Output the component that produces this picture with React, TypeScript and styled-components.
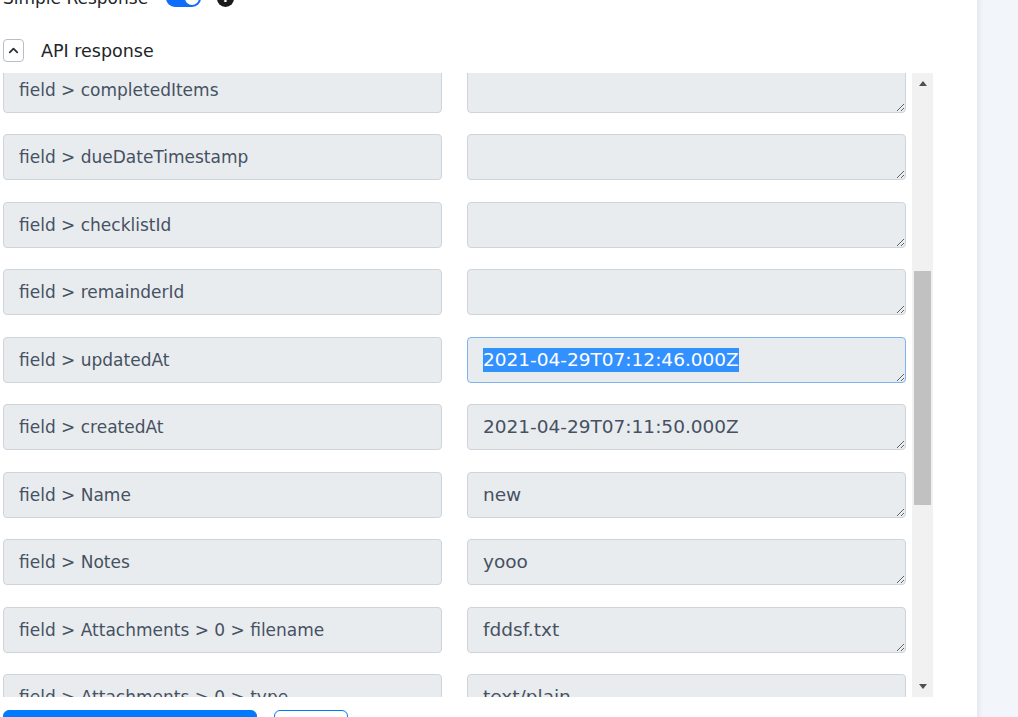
import React, { useLayoutEffect, useRef } from 'react';
import styled, { createGlobalStyle } from 'styled-components';
import { ChevronUp } from 'lucide-react';

interface ResponseField {
  key: string;
  value: string;
}

const fields: ResponseField[] = [
  { key: 'field > id', value: 'rec7Hk2LmQp0aZ' },
  { key: 'field > title', value: 'new' },
  { key: 'field > status', value: 'open' },
  { key: 'field > priority', value: '' },
  { key: 'field > assignee', value: '' },
  { key: 'field > labels', value: '' },
  { key: 'field > totalItems', value: '' },
  { key: 'field > completedItems', value: '' },
  { key: 'field > dueDateTimestamp', value: '' },
  { key: 'field > checklistId', value: '' },
  { key: 'field > remainderId', value: '' },
  { key: 'field > updatedAt', value: '2021-04-29T07:12:46.000Z' },
  { key: 'field > createdAt', value: '2021-04-29T07:11:50.000Z' },
  { key: 'field > Name', value: 'new' },
  { key: 'field > Notes', value: 'yooo' },
  { key: 'field > Attachments > 0 > filename', value: 'fddsf.txt' },
  { key: 'field > Attachments > 0 > type', value: 'text/plain' },
  { key: 'field > Attachments > 0 > size', value: '12' },
  { key: 'field > Attachments > 0 > url', value: '' },
];

const SELECTED_KEY = 'field > updatedAt';

const GlobalStyle = createGlobalStyle`
  html, body {
    margin: 0;
    padding: 0;
    background: #ffffff;
    font-family: "DejaVu Sans", "Noto Sans", sans-serif;
    overflow: hidden;
  }

  ::selection {
    background: #3390ff;
    color: #ffffff;
  }
`;

const Layout = styled.div`
  display: flex;
  height: 100vh;
`;

const Main = styled.main`
  width: 977px;
  height: 100vh;
  overflow: hidden;
  flex-shrink: 0;
`;

const Content = styled.div`
  padding: 20px 0 40px 3px;
`;

const Aside = styled.aside`
  flex: 1;
  background: #f2f5f9;
  box-shadow: inset 5px 0 5px -3px rgba(40, 60, 90, 0.08);
`;

const SwitchRow = styled.div`
  display: flex;
  align-items: center;
  height: 26px;
  gap: 16px;
  font-size: 17px;
  color: #212529;
`;

const Switch = styled.span`
  position: relative;
  display: inline-block;
  width: 35px;
  height: 18px;
  margin-left: 2px;
  border-radius: 9px;
  background: #0d6efd;

  &::after {
    content: '';
    position: absolute;
    top: 2px;
    right: 2px;
    width: 14px;
    height: 14px;
    border-radius: 50%;
    background: #ffffff;
  }
`;

const HelpIcon = styled.span`
  display: inline-flex;
  align-items: center;
  justify-content: center;
  width: 17px;
  height: 17px;
  border-radius: 50%;
  background: #1a1a1a;
  color: #ffffff;
  font-size: 12px;
  font-weight: 700;
`;

const SectionHeader = styled.div`
  display: flex;
  align-items: center;
  gap: 17px;
  margin-top: 28px;
  height: 23px;
  font-size: 17.5px;
  color: #212529;
`;

const CollapseButton = styled.button`
  display: inline-flex;
  align-items: center;
  justify-content: center;
  width: 21px;
  height: 23px;
  padding: 0;
  border: 1px solid #b8bec6;
  border-radius: 4px;
  background: #ffffff;
  color: #2b2f33;
`;

const ResponsePanel = styled.div`
  display: flex;
  gap: 6px;
  width: 930px;
  height: 624px;
  margin-top: 11px;
`;

const FieldList = styled.div`
  flex: 1;
  overflow: hidden;
  display: grid;
  grid-template-columns: 439px 439px;
  grid-auto-rows: 46px;
  column-gap: 25px;
  row-gap: 21.5px;
  align-content: start;
`;

const FieldName = styled.div`
  display: flex;
  align-items: center;
  box-sizing: border-box;
  padding: 0 15px;
  border: 1px solid #ced4da;
  border-radius: 4px;
  background: #e9ecef;
  color: #465162;
  font-size: 17px;
  white-space: nowrap;
  overflow: hidden;
`;

const FieldValue = styled.textarea`
  display: block;
  box-sizing: border-box;
  width: 100%;
  height: 46px;
  margin: 0;
  padding: 10px 15px;
  border: 1px solid #ced4da;
  border-radius: 4px;
  background: #e9ecef;
  color: #465162;
  font-family: inherit;
  font-size: 18.5px;
  line-height: 24px;
  resize: vertical;
  overflow: hidden;

  &:focus {
    outline: none;
    border-color: #7fb3ef;
  }
`;

const ScrollTrack = styled.div`
  display: flex;
  flex-direction: column;
  width: 21px;
  background: #f1f1f1;
`;

const ScrollArrow = styled.div<{ $down?: boolean }>`
  display: flex;
  align-items: center;
  justify-content: center;
  height: 21px;

  &::before {
    content: '';
    border-left: 4.5px solid transparent;
    border-right: 4.5px solid transparent;
    ${({ $down }) =>
      $down ? 'border-top: 5px solid #505050;' : 'border-bottom: 5px solid #505050;'}
  }
`;

const ScrollBody = styled.div`
  flex: 1;
  padding: 0 2px;
`;

const ScrollThumb = styled.div<{ $offset: number; $size: number }>`
  margin-top: ${({ $offset }) => $offset}px;
  height: ${({ $size }) => $size}px;
  background: #c1c1c1;
`;

const Actions = styled.div`
  display: flex;
  gap: 17px;
  margin-top: 13px;
`;

const Button = styled.button<{ $outline?: boolean; $width: number }>`
  width: ${({ $width }) => $width}px;
  height: 38px;
  padding: 0 20px;
  border: 1px solid #007bff;
  border-radius: 6px;
  font-family: inherit;
  font-size: 15px;
  background: ${({ $outline }) => ($outline ? '#ffffff' : '#007bff')};
  color: ${({ $outline }) => ($outline ? '#007bff' : '#ffffff')};
`;

export default function App() {
  const mainRef = useRef<HTMLElement>(null);
  const listRef = useRef<HTMLDivElement>(null);
  const selectedRef = useRef<HTMLTextAreaElement>(null);

  useLayoutEffect(() => {
    if (mainRef.current) mainRef.current.scrollTop = 35;
    if (listRef.current) listRef.current.scrollTop = 479;
    const el = selectedRef.current;
    if (el) {
      el.focus({ preventScroll: true });
      el.setSelectionRange(0, el.value.length);
    }
  }, []);

  return (
    <>
      <GlobalStyle />
      <Layout>
        <Main ref={mainRef}>
          <Content>
            <SwitchRow>
              Simple Response
              <Switch />
              <HelpIcon>?</HelpIcon>
            </SwitchRow>
            <SectionHeader>
              <CollapseButton>
                <ChevronUp size={15} strokeWidth={2.8} />
              </CollapseButton>
              API response
            </SectionHeader>
            <ResponsePanel>
              <FieldList ref={listRef}>
                {fields.map((f) => (
                  <React.Fragment key={f.key}>
                    <FieldName>{f.key}</FieldName>
                    <FieldValue
                      readOnly
                      defaultValue={f.value}
                      ref={f.key === SELECTED_KEY ? selectedRef : undefined}
                    />
                  </React.Fragment>
                ))}
              </FieldList>
              <ScrollTrack>
                <ScrollArrow />
                <ScrollBody>
                  <ScrollThumb $offset={177} $size={234} />
                </ScrollBody>
                <ScrollArrow $down />
              </ScrollTrack>
            </ResponsePanel>
            <Actions>
              <Button $width={254}>Save &amp; Send Test Request</Button>
              <Button $outline $width={74}>Reset</Button>
            </Actions>
          </Content>
        </Main>
        <Aside />
      </Layout>
    </>
  );
}
